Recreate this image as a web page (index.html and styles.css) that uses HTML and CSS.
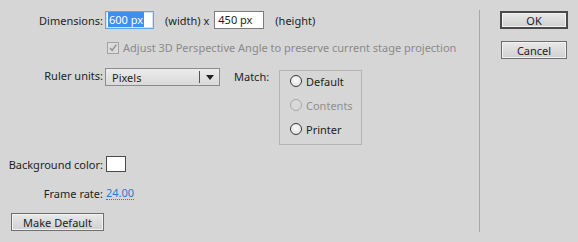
FILE: index.html
```html
<!DOCTYPE html>
<html>
<head>
<meta charset="utf-8">
<link rel="stylesheet" href="styles.css">
</head>
<body>
<div class="dialog">
  <div class="main">
    <div class="row row-dims">
      <span class="label">Dimensions:</span>
      <div class="field field-focus"><span class="sel">600 px</span></div>
      <span class="txt t-width">(width)&nbsp;x</span>
      <div class="field">450 px</div>
      <span class="txt t-height">(height)</span>
    </div>
    <div class="row row-check">
      <span class="check">
        <svg width="12" height="12" viewBox="0 0 12 12"><path d="M2.5 6 L5 9 L10 2" fill="none" stroke="#8c8c8c" stroke-width="1.6"/></svg>
      </span>
      <span class="disabled">Adjust 3D Perspective Angle to preserve current stage projection</span>
    </div>
    <div class="row row-ruler">
      <span class="label">Ruler units:</span>
      <div class="select">
        <span class="select-val">Pixels</span>
        <span class="select-div"></span>
        <span class="select-arrow"></span>
      </div>
      <span class="match-label">Match:</span>
      <div class="group">
        <div class="radio-row"><span class="radio"></span><span>Default</span></div>
        <div class="radio-row off"><span class="radio"></span><span>Contents</span></div>
        <div class="radio-row"><span class="radio"></span><span>Printer</span></div>
      </div>
    </div>
    <div class="row row-bg">
      <span class="label">Background color:</span>
      <span class="swatch"></span>
    </div>
    <div class="row row-fps">
      <span class="label">Frame rate:</span>
      <span class="link">24.00</span>
    </div>
    <div class="row row-btn">
      <button class="btn btn-default">Make Default</button>
    </div>
  </div>
  <div class="sep"></div>
  <div class="side">
    <button class="btn btn-ok">OK</button>
    <button class="btn btn-cancel">Cancel</button>
  </div>
</div>
</body>
</html>
```

FILE: styles.css
```css
* { box-sizing: border-box; }
html, body {
  margin: 0;
  padding: 0;
  background: #d6d6d6;
}
body {
  width: 578px;
  height: 242px;
  font-family: "Noto Sans", "DejaVu Sans", sans-serif;
  font-size: 11px;
  color: #1e1e1e;
  overflow: hidden;
}
.dialog {
  display: flex;
  height: 242px;
}
.main {
  width: 479px;
  padding-top: 11px;
  display: flex;
  flex-direction: column;
}
.sep {
  width: 1px;
  background: #a9a9a9;
  margin: 10px 0;
}
.side {
  padding: 11px 0 0 20px;
  display: flex;
  flex-direction: column;
  align-items: flex-start;
}
.row {
  display: flex;
  align-items: center;
}
.label {
  width: 104px;
  padding-right: 1px;
  text-align: right;
  flex: none;
  white-space: nowrap;
}
.field {
  width: 50px;
  height: 18px;
  margin-left: 1px;
  border: 1px solid #7c7c7c;
  background: #fff;
  padding-left: 3px;
  line-height: 16px;
  white-space: nowrap;
}
.field-focus {
  border-color: #5ea6ee;
  box-shadow: inset 0 0 0 1px #cfe4fb;
  width: 49px;
  padding-left: 2px;
}
.sel {
  background: #3d8ff0;
  color: #fff;
  padding: 0 1px;
}
.t-width { margin: 0 4px 0 11px; }
.t-height { margin-left: 11px; }
.row-dims { height: 18px; }
.row-check {
  margin-top: 12px;
  height: 13px;
  padding-left: 107px;
}
.check {
  width: 12px;
  height: 12px;
  border: 1px solid #a3a3a3;
  background: #dcdcdc;
  display: flex;
  align-items: center;
  justify-content: center;
  margin-right: 4px;
}
.check svg { display: block; }
.disabled { color: #8a8a8a; white-space: nowrap; }
.row-ruler {
  margin-top: 14px;
  align-items: flex-start;
}
.select {
  margin-left: 1px;
  width: 115px;
  height: 18px;
  border: 1px solid #8c8c8c;
  background: linear-gradient(#ececec, #d9d9d9);
  display: flex;
  align-items: center;
  position: relative;
}
.select-val { padding-left: 6px; flex: 1; }
.select-div {
  width: 1px;
  height: 12px;
  background: #555;
  margin-right: 6px;
}
.select-arrow {
  width: 0;
  height: 0;
  border-left: 4px solid transparent;
  border-right: 4px solid transparent;
  border-top: 5px solid #222;
  margin-right: 5px;
}
.match-label {
  margin-left: 14px;
  width: 45px;
  line-height: 18px;
}
.group {
  margin-top: 2px;
  width: 83px;
  height: 75px;
  border: 1px solid #b4b4b4;
  padding: 4px 0 0 10px;
  display: flex;
  flex-direction: column;
  gap: 12px;
}
.radio-row {
  display: flex;
  align-items: center;
  height: 12px;
  white-space: nowrap;
}
.radio {
  width: 12px;
  height: 12px;
  border-radius: 50%;
  border: 1px solid #3a3a3a;
  background: radial-gradient(circle at 50% 40%, #fafafa, #dcdcdc);
  margin-right: 4px;
  flex: none;
}
.radio-row.off { color: #8f8f8f; }
.radio-row.off .radio { border-color: #a8a8a8; background: #d9d9d9; }
.row-bg {
  margin-top: 11px;
  height: 16px;
}
.swatch {
  width: 20px;
  height: 16px;
  border: 1px solid #4a4a4a;
  background: #fff;
  margin-left: 2px;
}
.row-fps {
  margin-top: 14px;
  height: 14px;
}
.link {
  margin-left: 2px;
  color: #2f76cf;
  border-bottom: 1px dotted #2f76cf;
  line-height: 12px;
}
.row-btn {
  margin-top: 13px;
  padding-left: 11px;
}
.btn {
  font-family: inherit;
  font-size: 11px;
  color: #222;
  height: 18px;
  padding: 0;
  background: linear-gradient(#e8e8e8, #d0d0d0);
  border: 1px solid #6e6e6e;
  box-shadow: inset 0 0 0 1px #f2f2f2;
  line-height: 15px;
}
.btn-default { width: 93px; }
.btn-ok {
  width: 68px;
  border: 2px solid #4a4a4a;
}
.btn-cancel {
  width: 66px;
  margin: 12px 0 0 1px;
}
```
